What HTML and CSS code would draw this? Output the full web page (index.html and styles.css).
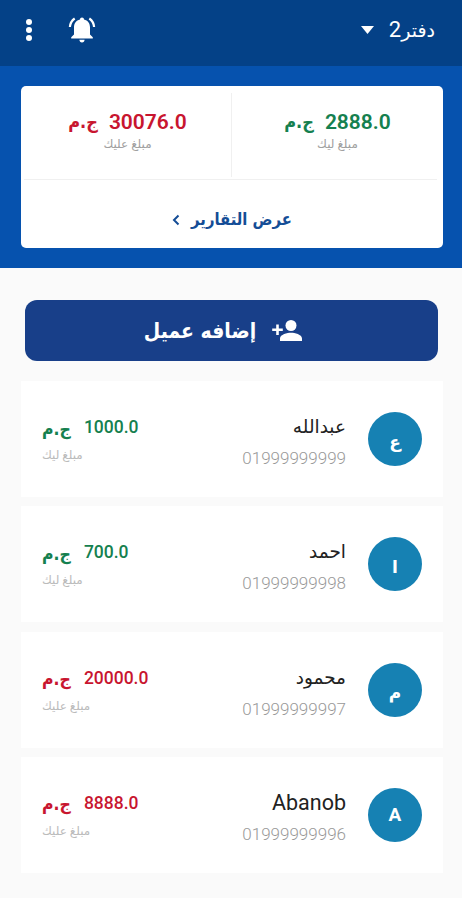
FILE: index.html
```html
<!DOCTYPE html>
<html lang="ar" dir="rtl">
<head>
<meta charset="utf-8">
<title>دفتر2</title>
<link rel="stylesheet" href="styles.css">
</head>
<body>
<div class="app">
  <header class="topbar">
    <div class="book"><span class="book-name"><span class="ar">دفتر</span>2</span><svg class="caret" viewBox="0 0 13 8"><path d="M0 0h13L6.500 8z"/></svg></div>
    <div class="actions">
      <svg class="bell" viewBox="0 0 28 28"><path d="M14 1.500c1.200 0 2 .8 2 1.900 3.800.9 6 3.900 6 7.800v7.300l2.800 2.700v1.300H3.200v-1.300L6 18.500v-7.300c0-3.900 2.200-6.900 6-7.800 0-1.100.8-1.900 2-1.900zM11.400 23.700h5.200c0 1.600-1.100 2.800-2.600 2.800s-2.600-1.200-2.600-2.800z"/><path class="ring" d="M6.700 2.500C3.900 4.500 2.200 7.300 1.900 11M21.300 2.500c2.800 2 4.500 4.800 4.800 8.500"/></svg>
      <svg class="dots" viewBox="0 0 8 24"><circle cx="4" cy="4" r="3"/><circle cx="4" cy="12" r="3"/><circle cx="4" cy="20" r="3"/></svg>
    </div>
  </header>
  <section class="hero">
    <div class="summary">
      <div class="totals">
        <div class="total credit">
          <div class="sum"><span>2888.0</span><span class="cur">ج.م</span></div>
          <div class="caption">مبلغ ليك</div>
        </div>
        <div class="total debit">
          <div class="sum"><span>30076.0</span><span class="cur">ج.م</span></div>
          <div class="caption">مبلغ عليك</div>
        </div>
      </div>
      <div class="reports"><span class="reports-text">عرض التقارير</span><svg class="chev" viewBox="0 0 8 12"><path d="M6.500 1.500L2 6l4.500 4.500"/></svg></div>
    </div>
  </section>
  <main class="content">
    <button class="add"><svg class="person" viewBox="0 0 30 24"><circle cx="19" cy="6.500" r="5.500"/><path d="M8 22v-2.500c0-4 7.300-5.700 11-5.700s11 1.700 11 5.700V22zM4.200 5.500h2.600v4h4v2.600h-4v4H4.200v-4h-4V9.500h4z"/></svg><span class="add-text">إضافه عميل</span></button>
    <div class="list">
      <article class="client credit">
        <div class="avatar">ع</div>
        <div class="who"><div class="name">عبدالله</div><div class="phone">01999999999</div></div>
        <div class="balance"><div class="amount"><span>1000.0</span><span class="cur">ج.م</span></div><div class="caption">مبلغ ليك</div></div>
      </article>
      <article class="client credit">
        <div class="avatar">ا</div>
        <div class="who"><div class="name">احمد</div><div class="phone">01999999998</div></div>
        <div class="balance"><div class="amount"><span>700.0</span><span class="cur">ج.م</span></div><div class="caption">مبلغ ليك</div></div>
      </article>
      <article class="client debit">
        <div class="avatar">م</div>
        <div class="who"><div class="name">محمود</div><div class="phone">01999999997</div></div>
        <div class="balance"><div class="amount"><span>20000.0</span><span class="cur">ج.م</span></div><div class="caption">مبلغ عليك</div></div>
      </article>
      <article class="client debit">
        <div class="avatar latin">A</div>
        <div class="who"><div class="name latin">Abanob</div><div class="phone">01999999996</div></div>
        <div class="balance"><div class="amount"><span>8888.0</span><span class="cur">ج.م</span></div><div class="caption">مبلغ عليك</div></div>
      </article>
    </div>
  </main>
</div>
</body>
</html>
```
FILE: styles.css
```css
* { box-sizing: border-box; }
body { margin: 0; background: #fff; font-family: Roboto, "DejaVu Sans", sans-serif; white-space: nowrap; }
svg { display: block; flex: none; }
.app { height: 898px; background: #fafafa; overflow: hidden; }
.topbar { height: 66px; padding: 0 27px 6px 25px; background: #044187; color: #fff; display: flex; justify-content: space-between; align-items: center; }
.book { display: flex; align-items: center; gap: 15px; }
.book-name { font-size: 22px; line-height: 28px; }
.book-name .ar { font-size: 19px; }
.caret { width: 13px; height: 8px; fill: #fff; }
.actions { display: flex; align-items: center; gap: 35px; }
.bell { width: 28px; height: 28px; fill: #fff; }
.ring { fill: none; stroke: #fff; stroke-width: 2.2; }
.dots { width: 8px; height: 24px; fill: #fff; }
.hero { height: 202px; padding: 20px 19px 20px 21px; background: #0652ae; }
.summary { height: 162px; background: #fff; border-radius: 5px; }
.totals { height: 94px; margin: 0 6px 0 3px; border-bottom: 1px solid #f0f0f0; display: flex; }
.total { display: flex; flex-direction: column; align-items: center; }
.total.credit { width: 205px; padding-top: 23px; margin: 0 -3px 0 3px; }
.total.debit { width: 208px; margin: 7px 0 2px; padding: 16px 0 0; border-right: 1px solid #f0f0f0; }
.sum { height: 26px; display: flex; align-items: center; gap: 11px; font-size: 21px; line-height: 26px; font-weight: 600; }
.sum .cur { font: bold condensed 18px/26px "DejaVu Sans Condensed", "DejaVu Sans", sans-serif; }
.credit .sum, .credit .amount { color: #15804f; }
.debit .sum, .debit .amount { color: #c8152f; }
.caption { height: 18px; font-size: 12px; line-height: 18px; color: #a0a0a0; }
.reports { height: 68px; padding-top: 12px; display: flex; align-items: center; justify-content: center; gap: 11px; color: #144d96; }
.reports-text { font: bold condensed 16.500px/24px "DejaVu Sans Condensed", "DejaVu Sans", sans-serif; }
.chev { width: 8px; height: 12px; fill: none; stroke: #144d96; stroke-width: 2; }
.content { padding: 32px 19px 0 21px; }
.add { width: 413px; height: 61px; margin: 0 5px 0 4px; padding: 0 17px 0 0; border: 0; border-radius: 12px; background: #183f89; color: #fff; display: flex; align-items: center; justify-content: center; gap: 16px; }
.person { width: 30px; height: 24px; fill: #fff; }
.add-text { font: bold condensed 21px/28px "DejaVu Sans Condensed", "DejaVu Sans", sans-serif; }
.list { margin-top: 20px; display: flex; flex-direction: column; gap: 9.300px; }
.client { height: 116px; padding: 0 21px; background: #fff; display: flex; align-items: center; }
.avatar { width: 54px; height: 54px; padding-top: 3px; border-radius: 50%; background: #1681b3; color: #fff; font-size: 17px; font-weight: bold; line-height: 54px; text-align: center; }
.avatar.latin { padding-top: 0; font-size: 19px; }
.who { margin-right: 22px; padding-top: 8px; }
.name { height: 30px; line-height: 30px; font-size: 18.500px; color: #222; }
.name.latin { font-size: 21.500px; }
.phone { height: 32px; line-height: 32px; font-size: 17px; font-weight: 300; color: #999; }
.balance { margin-right: auto; padding-top: 4px; display: flex; flex-direction: column; align-items: flex-end; }
.amount { height: 28px; display: flex; align-items: center; gap: 13px; font-size: 17.500px; font-weight: 500; line-height: 28px; }
.amount .cur { padding-top: 3px; font: bold condensed 17.500px/28px "DejaVu Sans Condensed", "DejaVu Sans", sans-serif; }
.client .caption { height: 28px; line-height: 28px; color: #bbb; }
```
